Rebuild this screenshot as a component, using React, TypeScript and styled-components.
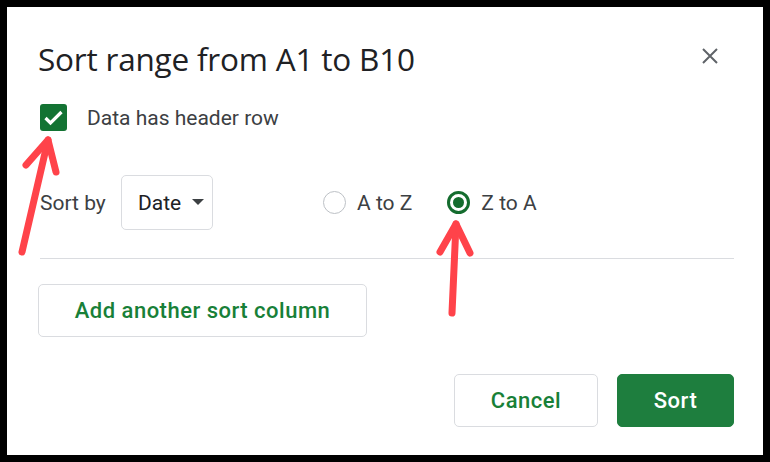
import styled, { createGlobalStyle } from 'styled-components';

const Global = createGlobalStyle`
  html, body {
    margin: 0;
    padding: 0;
    background: #000;
  }
  body {
    font-family: Roboto, "Liberation Sans", Arial, sans-serif;
  }
`

const Frame = styled.div`
  width: 770px;
  height: 462px;
  box-sizing: border-box;
  padding: 7px;
  background: #000;
`

const Panel = styled.div`
  position: relative;
  width: 756px;
  height: 448px;
  box-sizing: border-box;
  background: #fff;
  padding: 21px 29px 0 33px;
`

const Header = styled.div`
  display: flex;
  align-items: center;
  justify-content: space-between;
  height: 60px;
`

const Title = styled.h1`
  margin: 0 0 0 -2px;
  font-family: "Open Sans", Roboto, sans-serif;
  font-size: 31.5px;
  font-weight: 400;
  color: #202124;
  letter-spacing: -0.2px;
`

const CloseButton = styled.button`
  width: 32px;
  height: 32px;
  margin: -4px 8px 0 0;
  border: none;
  background: none;
  padding: 0;
  display: flex;
  align-items: center;
  justify-content: center;
`

const CheckRow = styled.label`
  display: flex;
  align-items: center;
  gap: 20px;
  margin-top: 16px;
  height: 27px;
  font-size: 21px;
  color: #3c4043;
`

const CheckBox = styled.span`
  width: 27px;
  height: 27px;
  border-radius: 3px;
  background: #137333;
  display: flex;
  align-items: center;
  justify-content: center;
`

const SortRow = styled.div`
  display: flex;
  align-items: center;
  margin-top: 44px;
  height: 55px;
  font-size: 21px;
  color: #3c4043;
`

const Label = styled.span`
  width: 81px;
`

const Select = styled.div`
  width: 92px;
  height: 55px;
  box-sizing: border-box;
  border: 1px solid #dadce0;
  border-radius: 5px;
  display: flex;
  align-items: center;
  padding-left: 16px;
  gap: 11px;
  color: #202124;
`

const Caret = styled.span`
  width: 0;
  height: 0;
  border-left: 6px solid transparent;
  border-right: 6px solid transparent;
  border-top: 6px solid #3c4043;
  margin-top: -2px;
`

const RadioGroup = styled.div`
  display: flex;
  align-items: center;
  margin-left: 110px;
  gap: 35px;
`

const RadioItem = styled.label`
  display: flex;
  align-items: center;
  gap: 11px;
`

const RadioCircle = styled.span<{ $checked?: boolean }>`
  width: 23px;
  height: 23px;
  box-sizing: border-box;
  border-radius: 50%;
  border: ${p => (p.$checked ? '3px solid #146c2e' : '1px solid #bdc1c6')};
  display: flex;
  align-items: center;
  justify-content: center;
  &::after {
    content: '';
    display: ${p => (p.$checked ? 'block' : 'none')};
    width: 11px;
    height: 11px;
    border-radius: 50%;
    background: #146c2e;
  }
`

const Divider = styled.hr`
  margin: 28px 0 0;
  border: none;
  border-top: 1px solid #dadce0;
`

const Button = styled.button<{ $primary?: boolean; $w: number }>`
  width: ${p => p.$w}px;
  height: 53px;
  box-sizing: border-box;
  border-radius: 5px;
  border: 1px solid ${p => (p.$primary ? '#1e7e3e' : '#dadce0')};
  background: ${p => (p.$primary ? '#1e7e3e' : '#fff')};
  color: ${p => (p.$primary ? '#fff' : '#188038')};
  font-family: Roboto, sans-serif;
  font-size: 22px;
  font-weight: 500;
  letter-spacing: 0.5px;
  padding: 0;
`

const AddButton = styled(Button)`
  margin: 25px 0 0 -2px;
  display: block;
`

const Footer = styled.div`
  display: flex;
  justify-content: flex-end;
  gap: 19px;
  margin-top: 37px;
`

const Annotations = styled.svg`
  position: absolute;
  left: -7px;
  top: -7px;
  pointer-events: none;
`

const Arrow = ({ tail, tip, left, right }: { tail: number[]; tip: number[]; left: number[]; right: number[] }) => (
  <g fill="none" stroke="#ff434a" strokeWidth={7} strokeLinecap="round" strokeLinejoin="round">
    <path d={`M${tail[0]} ${tail[1]} L${tip[0]} ${tip[1]}`} />
    <path d={`M${left[0]} ${left[1]} L${tip[0]} ${tip[1]} L${right[0]} ${right[1]}`} />
  </g>
)

const App = () => {
  return (
    <>
      <Global />
      <Frame>
        <Panel>
          <Header>
            <Title>Sort range from A1 to B10</Title>
            <CloseButton aria-label="Close">
              <svg width="16" height="16" viewBox="0 0 16 16">
                <path d="M1 1 L15 15 M15 1 L1 15" stroke="#5f6368" strokeWidth="2" />
              </svg>
            </CloseButton>
          </Header>
          <CheckRow>
            <CheckBox>
              <svg width="27" height="27" viewBox="0 0 27 27">
                <path d="M5.5 14 L10.5 19 L21.5 8" fill="none" stroke="#fff" strokeWidth="3.2" />
              </svg>
            </CheckBox>
            Data has header row
          </CheckRow>
          <SortRow>
            <Label>Sort by</Label>
            <Select>
              Date
              <Caret />
            </Select>
            <RadioGroup>
              <RadioItem>
                <RadioCircle />
                A to Z
              </RadioItem>
              <RadioItem>
                <RadioCircle $checked />
                Z to A
              </RadioItem>
            </RadioGroup>
          </SortRow>
          <Divider />
          <AddButton $w={329}>Add another sort column</AddButton>
          <Footer>
            <Button $w={144}>Cancel</Button>
            <Button $w={117} $primary>Sort</Button>
          </Footer>
          <Annotations width="770" height="462" viewBox="0 0 770 462">
            <Arrow tail={[22, 252]} tip={[48, 140]} left={[26, 165]} right={[56, 172]} />
            <Arrow tail={[452, 313]} tip={[456, 224]} left={[440, 252]} right={[470, 253]} />
          </Annotations>
        </Panel>
      </Frame>
    </>
  );
};

export default App;
